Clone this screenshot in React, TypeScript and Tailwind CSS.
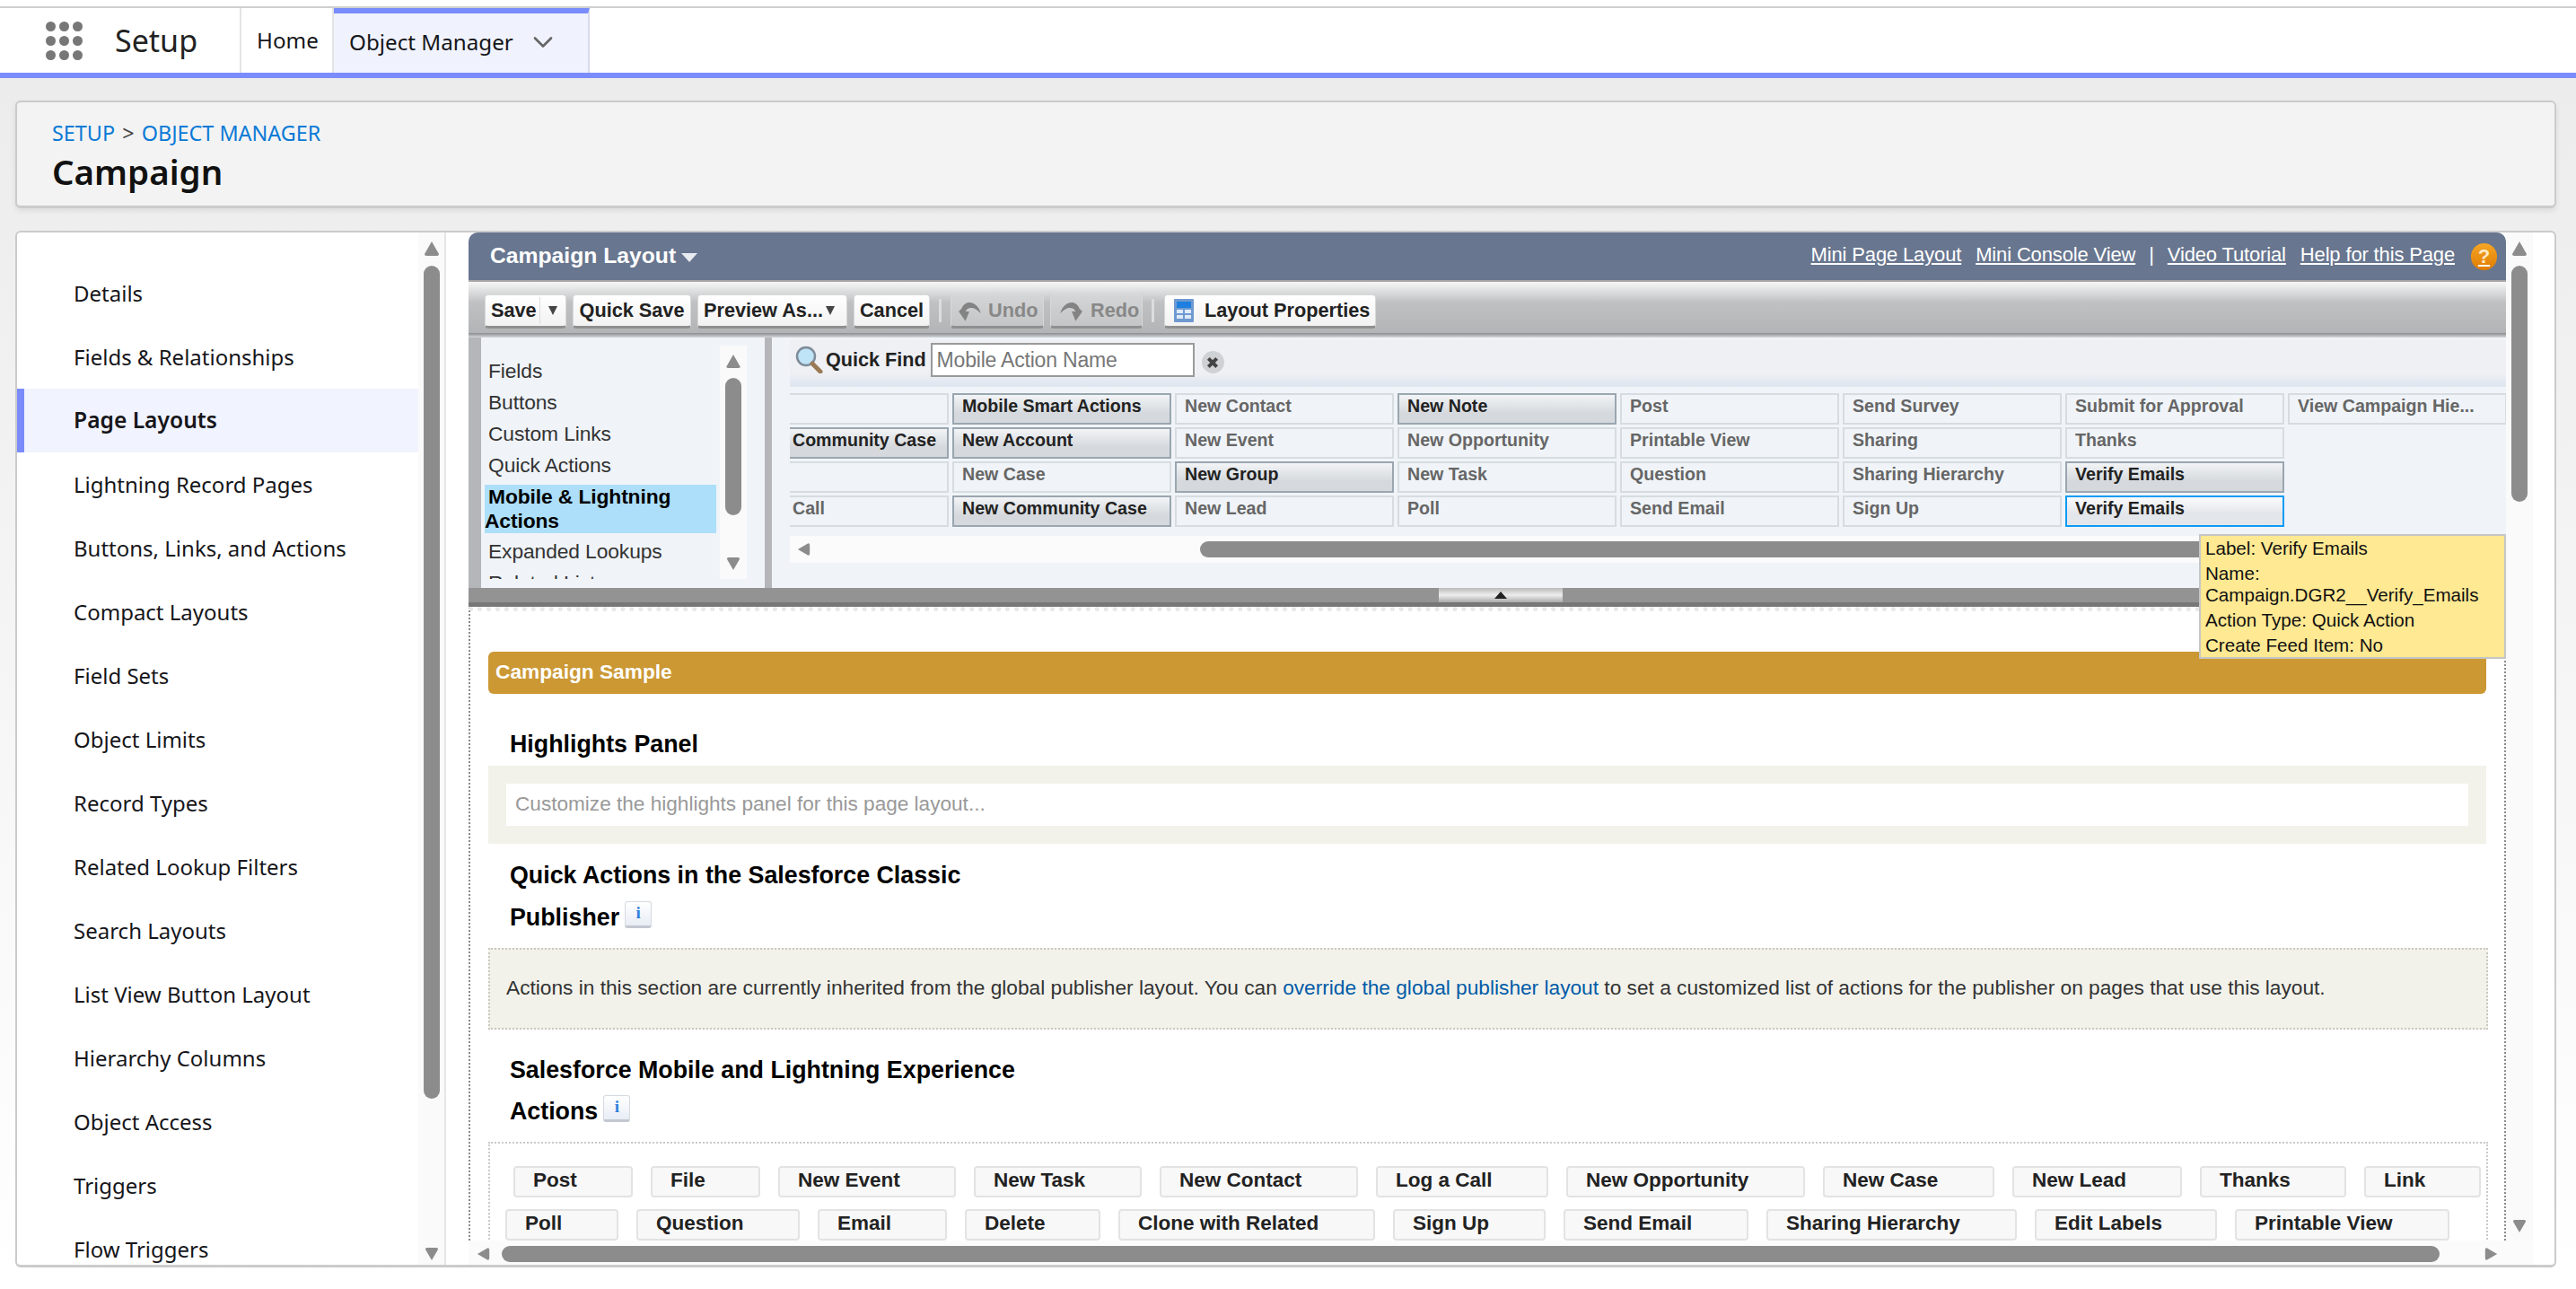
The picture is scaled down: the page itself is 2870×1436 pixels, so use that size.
import React from "react";
import { ChevronDown } from "lucide-react";

const sideItems = ["Details","Fields & Relationships","Page Layouts","Lightning Record Pages","Buttons, Links, and Actions","Compact Layouts","Field Sets","Object Limits","Record Types","Related Lookup Filters","Search Layouts","List View Button Layout","Hierarchy Columns","Object Access","Triggers","Flow Triggers"];

type Cell = { t: string; k?: "on" | "focus" };
const cells: (Cell | null)[] = [
  { t: "" },{ t: "Mobile Smart Actions", k: "on" },{ t: "New Contact" },{ t: "New Note", k: "on" },{ t: "Post" },{ t: "Send Survey" },{ t: "Submit for Approval" },{ t: "View Campaign Hie..." },
  { t: "Community Case", k: "on" },{ t: "New Account", k: "on" },{ t: "New Event" },{ t: "New Opportunity" },{ t: "Printable View" },{ t: "Sharing" },{ t: "Thanks" },null,
  { t: "" },{ t: "New Case" },{ t: "New Group", k: "on" },{ t: "New Task" },{ t: "Question" },{ t: "Sharing Hierarchy" },{ t: "Verify Emails", k: "on" },null,
  { t: "Call" },{ t: "New Community Case", k: "on" },{ t: "New Lead" },{ t: "Poll" },{ t: "Send Email" },{ t: "Sign Up" },{ t: "Verify Emails", k: "focus" },null,
];

const row1 = [["Post","w-[133px]"],["File","w-[122px]"],["New Event","w-[198px]"],["New Task","w-[187px]"],["New Contact","w-[221px]"],["Log a Call","w-[192px]"],["New Opportunity","w-[266px]"],["New Case","w-[191px]"],["New Lead","w-[189px]"],["Thanks","w-[163px]"],["Link","w-[130px]"]];
const row2 = [["Poll","w-[126px]"],["Question","w-[182px]"],["Email","w-[144px]"],["Delete","w-[151px]"],["Clone with Related","w-[286px]"],["Sign Up","w-[170px]"],["Send Email","w-[206px]"],["Sharing Hierarchy","w-[279px]"],["Edit Labels","w-[203px]"],["Printable View","w-[239px]"]];

function Tri({ dir, cls }: { dir: "up" | "down" | "left" | "right"; cls: string }) {
  const p = { up: "M9 1 L17 15 Q17 17 15 17 L3 17 Q1 17 1 15 Z", down: "M9 17 L17 3 Q17 1 15 1 L3 1 Q1 1 1 3 Z", left: "M1 9 L15 1 Q17 1 17 3 L17 15 Q17 17 15 17 Z", right: "M17 9 L3 1 Q1 1 1 3 L1 15 Q1 17 3 17 Z" }[dir];
  return <svg viewBox="0 0 18 18" className={cls}><path d={p} fill="#8c8c8c" /></svg>;
}

function Btn({ children, cls }: { children: React.ReactNode; cls: string }) {
  return <div className={"h-[38px] flex items-center whitespace-nowrap rounded-[4px] bg-gradient-to-b from-white to-[#f2f2f2] border border-[#d8d8d8] border-b-[3px] border-b-[#8f8f8f] text-[21.7px] font-bold " + cls}>{children}</div>;
}

function Caret() {
  return <svg viewBox="0 0 12 14" className="w-[10px] h-[14px]"><path d="M0 1 H12 L6 13 Z" fill="#444" /></svg>;
}

function InfoBtn() {
  return <span className="inline-flex w-[30px] h-[30px] items-center justify-center rounded-[3px] border border-[#d5d9e0] border-b-[3px] border-b-[#c3c8d0] bg-gradient-to-b from-white to-[#e8edf5] ml-[6px] align-[8px] font-['Liberation_Serif',serif] text-[#2f80dd] text-[19px] font-bold leading-none pb-[3px]">i</span>;
}

export default function App() {
  return (
    <div className="w-[2870px] h-[1436px] overflow-hidden flex flex-col bg-white font-['Noto_Sans',sans-serif] text-[#16161a]">
      <div className="h-[9px] border-b-2 border-[#cfcfcf] shrink-0" />
      <header className="h-[78px] shrink-0 flex border-b-[6px] border-[#7a8cfc] bg-white">
        <div className="w-[269px] flex items-center border-r-2 border-[#e4e4e4]">
          <div className="ml-[51px] grid grid-cols-3 gap-x-[4px] gap-y-[5px]">
            {Array.from({ length: 9 }).map((_, i) => <span key={i} className="w-[11px] h-[11px] rounded-full bg-[#777]" />)}
          </div>
          <span className="ml-[36px] text-[34px] leading-none text-[#222]">Setup</span>
        </div>
        <div className="w-[103px] flex items-center pl-[17px] border-r-2 border-[#e4e4e4] text-[24.2px] text-[#16161a]">Home</div>
        <div className="w-[285px] flex items-center pl-[17px] bg-[#f0f3fe] border-t-[6px] border-t-[#7a8cfc] border-r-2 border-r-[#d9dcec] text-[24.2px] pb-[2px]">
          <span>Object Manager</span>
          <ChevronDown className="w-[36px] h-[36px] ml-[15px] text-[#666]" strokeWidth={1.8} />
        </div>
      </header>
      <main className="flex-1 min-h-0 px-[17px] pt-[25px] pb-[24px] flex flex-col gap-[25px] bg-gradient-to-b from-[#ececec] to-white">
        <div className="h-[120px] w-[2831px] shrink-0 rounded-[6px] border-2 border-[#cbcbcb] border-b-[3px] bg-[#f3f3f3] shadow-[0_3px_6px_rgba(0,0,0,0.08)] pl-[39px] pt-[16px]">
          <div className="text-[23.4px] leading-[36px] text-[#0a7ad6]">SETUP <span className="text-[#444] mx-[2px]">&gt;</span> OBJECT MANAGER</div>
          <div className="text-[38.5px] leading-[50px] font-semibold text-[#111]">Campaign</div>
        </div>
        <div className="flex-1 min-h-0 w-[2831px] flex rounded-[6px] border-2 border-[#cbcbcb] border-b-[3px] bg-white overflow-hidden">
          <aside className="w-[478px] shrink-0 flex border-r-2 border-[#e6e6e6]">
            <nav className="w-[447px] shrink-0 pt-[32px]">
              {sideItems.map((s) => (
                <div key={s} className={"h-[71px] flex items-center pl-[63px] text-[24px] whitespace-nowrap " + (s === "Page Layouts" ? "border-l-[8px] border-[#7a8cfc] !pl-[55px] bg-[#f1f3fe] font-semibold !text-[24.6px]" : "")}>{s}</div>
              ))}
            </nav>
            <div className="w-[29px] shrink-0 bg-[#fafafa] flex flex-col items-center pt-[9px]">
              <Tri dir="up" cls="w-[18px] h-[18px]" />
              <div className="w-[18px] h-[928px] mt-[10px] rounded-full bg-[#8c8c8c]" />
              <Tri dir="down" cls="w-[18px] h-[16px] mt-[165px]" />
            </div>
          </aside>
          <section className="flex-1 min-w-0 flex flex-col pl-[25px] font-['Liberation_Sans',sans-serif]">
            <div className="h-[1123px] shrink-0 flex">
              <div className="w-[2270px] shrink-0 relative overflow-hidden">
                <div className="h-[53px] bg-[#68768f] rounded-t-[10px] flex items-center pl-[24px] pr-[10px] text-white">
                  <span className="text-[24.7px] font-bold pb-[2px]">Campaign Layout</span>
                  <svg viewBox="0 0 18 10" className="w-[18px] h-[10px] ml-[6px] mt-[3px]"><path d="M0 0 H18 L9 10 Z" fill="#e8ebf0" /></svg>
                  <div className="ml-auto flex items-center text-[22px] tracking-[-0.15px] underline">
                    <span className="pb-[4px]">Mini Page Layout</span>
                    <span className="ml-[16px] pb-[4px]">Mini Console View</span>
                    <span className="ml-[15px] mr-[15px] no-underline inline-block pb-[4px]">|</span>
                    <span className="pb-[4px]">Video Tutorial</span>
                    <span className="ml-[16px] pb-[4px]">Help for this Page</span>
                    <span className="ml-[18px] w-[29px] h-[30px] rounded-full bg-gradient-to-b from-[#f5a623] to-[#e07b00] items-center justify-center text-[22px] font-bold no-underline inline-flex text-[#ffe9c4]">?</span>
                  </div>
                </div>
                <div className="h-[2px] bg-[#a9a6a6]" />
                <div className="h-[57px] pt-[14px] pl-[18px] flex items-start gap-[7px] bg-gradient-to-b from-[#f7f7f7] via-[#c0c1c3] via-40% to-[#b3b4b6] text-[#222]">
                  <Btn cls="w-[91px] pl-[6px]"><span>Save</span><span className="ml-[3px] w-px h-[30px] bg-[#ddd]" /><span className="ml-[9px]"><Caret /></span></Btn>
                  <Btn cls="w-[132px] justify-center">Quick Save</Btn>
                  <Btn cls="w-[167px] pl-[6px]"><span>Preview As...</span><span className="ml-[3px]"><Caret /></span></Btn>
                  <Btn cls="w-[85px] justify-center">Cancel</Btn>
                  <span className="w-[3px] h-[26px] mt-[5px] mx-[3px] bg-[#ddd]" />
                  <Btn cls="w-[104px] !from-[#d4d5d6] !to-[#c4c5c6] text-[#888] pl-[6px] gap-[5px]">
                    <svg viewBox="0 0 28 28" className="w-[30px] h-[30px] shrink-0"><path d="M2 15 L9 25 L13 15 L9 15 C11 10 18 9 25 17 C22 5 9 1 5 12 Z" fill="#838383" /></svg><span>Undo</span>
                  </Btn>
                  <Btn cls="w-[103px] !from-[#d4d5d6] !to-[#c4c5c6] text-[#888] pl-[7px] gap-[7px]">
                    <svg viewBox="0 0 28 28" className="w-[30px] h-[30px] shrink-0"><path d="M26 15 L19 25 L15 15 L19 15 C17 10 10 9 3 17 C6 5 19 1 23 12 Z" fill="#838383" /></svg><span>Redo</span>
                  </Btn>
                  <span className="w-[3px] h-[26px] mt-[5px] mx-[3px] bg-[#ddd]" />
                  <Btn cls="w-[236px] pl-[10px] gap-[12px] ml-[1px]">
                    <svg viewBox="0 0 22 26" className="w-[22px] h-[26px] shrink-0"><rect width="22" height="26" rx="1" fill="#6f9ad0" /><rect x="3" y="3" width="16" height="7" fill="#1f7fe0" /><rect x="3" y="12" width="7" height="4" fill="#dfeafa" /><rect x="12" y="12" width="7" height="4" fill="#dfeafa" /><rect x="3" y="18" width="7" height="4" fill="#dfeafa" /><rect x="12" y="18" width="7" height="4" fill="#dfeafa" /></svg>
                    <span>Layout Properties</span>
                  </Btn>
                </div>
                <div className="h-[5px] bg-gradient-to-b from-[#8a8d90] to-[#d5d7da]" />
                <div className="h-[279px] bg-[#b4b6b9] pl-[14px] flex">
                  <div className="w-[316px] shrink-0 bg-[#f0f4f8] relative pl-[4px] pt-[6px] overflow-hidden">
                    <div className="h-[263px] w-[258px] overflow-hidden text-[22.8px] tracking-[-0.1px] text-[#333] pt-[14px]">
                      {["Fields","Buttons","Custom Links","Quick Actions"].map((t) => <div key={t} className="h-[35px] leading-[35px] pl-[4px]">{t}</div>)}
                      <div className="h-[54px] bg-[#addffa] text-[#000] font-bold leading-[27px] mt-[4px]"><span className="pl-[4px]">Mobile &amp; Lightning</span><br />Actions</div>
                      <div className="h-[35px] leading-[35px] pl-[4px] mt-[3px]">Expanded Lookups</div>
                      <div className="h-[35px] leading-[35px] pl-[4px]">Related Lists</div>
                    </div>
                    <div className="absolute left-[266px] top-[9px] w-[30px] h-[260px] bg-[#fafafa] flex flex-col items-center pt-[9px]">
                      <Tri dir="up" cls="w-[18px] h-[17px]" />
                      <div className="w-[18px] h-[153px] mt-[10px] rounded-full bg-[#8c8c8c]" />
                      <Tri dir="down" cls="w-[18px] h-[16px] mt-[46px]" />
                    </div>
                  </div>
                  <div className="w-[8px] shrink-0 bg-[#b4b6b9]" />
                  <div className="flex-1 min-w-0 bg-[#f0f4f8] pl-[20px] pt-[3px] overflow-hidden">
                    <div className="h-[52px] bg-gradient-to-b from-[#eff0f4] via-[#eff0f4] via-70% to-[#dde5f0] flex items-start">
                      <svg viewBox="0 0 32 32" className="w-[32px] h-[32px] mt-[5px] ml-[5px] shrink-0"><circle cx="13" cy="13" r="10" fill="#bfe3f7" stroke="#7f8c99" strokeWidth="2.5" /><path d="M20 21 L29 30" stroke="#9a7a55" strokeWidth="5" strokeLinecap="round" /></svg>
                      <span className="ml-[3px] mt-[10px] text-[21.6px] font-bold text-[#222] leading-[23px] whitespace-nowrap">Quick Find</span>
                      <div className="ml-[5px] mt-[3px] w-[294px] h-[38px] bg-white border-2 border-[#9a9a9a] flex items-center pl-[5px] pt-[1px] text-[23px] tracking-[-0.2px] text-[#777] whitespace-nowrap">Mobile Action Name</div>
                      <span className="ml-[8px] mt-[12px] w-[25px] h-[25px] rounded-full bg-[#cfd2d5] flex items-center justify-center">
                        <svg viewBox="0 0 12 12" className="w-[14px] h-[14px]"><path d="M2 2 L10 10 M10 2 L2 10" stroke="#444" strokeWidth="3.4" /></svg>
                      </span>
                    </div>
                    <div className="mt-[7px] grid grid-cols-[177px_repeat(7,244px)] gap-x-[4px] gap-y-[3px] text-[19.6px] font-bold">
                      {cells.map((c, i) => {
                        if (!c) return <div key={i} className="h-[35px]" />;
                        const first = i % 8 === 0;
                        const base = "h-[35px] flex items-center border-2 whitespace-nowrap pb-[5px] ";
                        const pad = first ? "border-l-0 pl-[3px] " : "pl-[9px] ";
                        const look = c.k === "on" ? "border-[#9aa6b0] bg-gradient-to-b from-[#f2f4f6] to-[#d5d9dd] via-[#d5d9dd] via-65% text-[#222]" : c.k === "focus" ? "border-[#0a9bf5] bg-gradient-to-b from-[#fafbfc] via-[#e3e6ea] via-60% to-[#e3e6ea] text-[#222]" : "border-[#d6dce0] text-[#666]";
                        return <div key={i} className={base + pad + look}>{c.t}</div>;
                      })}
                    </div>
                    <div className="mt-[10px] h-[30px] bg-[#fbfbfb] flex items-center">
                      <Tri dir="left" cls="w-[15px] h-[18px] ml-[8px]" />
                      <div className="w-[1140px] h-[18px] rounded-full bg-[#8c8c8c] ml-[434px]" />
                    </div>
                  </div>
                </div>
                <div className="h-[16px] bg-[#939393] flex justify-center">
                  <div className="w-[138px] h-[16px] ml-[30px] bg-gradient-to-b from-[#bbb] via-[#eee] to-[#aaa] flex items-center justify-center">
                    <svg viewBox="0 0 14 8" className="w-[14px] h-[8px]"><path d="M7 0 L14 8 H0 Z" fill="#222" /></svg>
                  </div>
                </div>
                <div className="h-[5px] bg-[#777]" />
                <div className="h-[706px] border-x-2 border-dotted border-x-[#8a8a8a] pl-[20px] pr-[18px] border-t-[5px] border-t-[#e8e8e8] overflow-hidden">
                  <div className="mt-[45px] h-[47px] mr-[2px] bg-[#cb9834] rounded-[6px] flex items-center pl-[8px] pb-[2px] text-white text-[22.7px] font-bold">Campaign Sample</div>
                  <h2 className="mt-[41px] pl-[24px] text-[26.8px] leading-[30px] font-bold text-black">Highlights Panel</h2>
                  <div className="mt-[9px] h-[87px] mr-[2px] bg-[#f2f2eb] px-[20px] pt-[20px]"><div className="h-[47px] bg-white flex items-center pl-[10px] pb-[2px] text-[22.6px] text-[#999]">Customize the highlights panel for this page layout...</div></div>
                  <h2 className="mt-[12px] pl-[24px] text-[26.8px] leading-[47px] font-bold text-black">Quick Actions in the Salesforce Classic<br />Publisher<InfoBtn /></h2>
                  <div className="mt-[10px] h-[91px] bg-[#f2f2eb] border-2 border-dotted border-[#c9c9c0] flex items-center pl-[18px] pb-[2px] text-[22.7px] text-[#333] whitespace-nowrap">
                    <span>Actions in this section are currently inherited from the global publisher layout. You can <span className="text-[#015ba7]">override the global publisher layout</span> to set a customized list of actions for the publisher on pages that use this layout.</span>
                  </div>
                  <h2 className="mt-[22px] pl-[24px] text-[26.8px] leading-[46px] font-bold text-black">Salesforce Mobile and Lightning Experience<br />Actions<InfoBtn /></h2>
                  <div className="mt-[11px] border-2 border-dotted border-[#c9c9c9] border-b-0 h-[120px] pt-[25px] text-[22.5px] font-bold text-[#222] overflow-hidden">
                    <div className="flex gap-[20px] pl-[26px]">
                      {row1.map(([t, w]) => <div key={t} className={"h-[35px] shrink-0 bg-[#f8f8f8] border-2 border-[#e3e3e3] rounded-[4px] flex items-center pl-[20px] pb-[3px] whitespace-nowrap " + w}>{t}</div>)}
                    </div>
                    <div className="mt-[13px] flex gap-[20px] pl-[17px]">
                      {row2.map(([t, w]) => <div key={t} className={"h-[35px] shrink-0 bg-[#f8f8f8] border-2 border-[#e3e3e3] rounded-[4px] flex items-center pl-[20px] pb-[3px] whitespace-nowrap " + w}>{t}</div>)}
                    </div>
                  </div>
                </div>
                <div className="absolute left-[1928px] top-[336px] w-[342px] h-[139px] bg-[#ffe992] border-2 border-[#c6c6c6] pl-[5px] pt-[2px] text-[20.6px] text-[#111] leading-[24px]">
                  <div>Label: Verify Emails</div>
                  <div className="mt-[4px]">Name:</div>
                  <div>Campaign.DGR2__Verify_Emails</div>
                  <div className="mt-[4px]">Action Type: Quick Action</div>
                  <div className="mt-[4px]">Create Feed Item: No</div>
                </div>
              </div>
              <div className="w-[30px] shrink-0 bg-[#fafafa] flex flex-col items-center pt-[9px]">
                <Tri dir="up" cls="w-[18px] h-[18px]" />
                <div className="w-[18px] h-[263px] mt-[10px] rounded-full bg-[#8c8c8c]" />
                <Tri dir="down" cls="w-[18px] h-[16px] mt-[799px]" />
              </div>
            </div>
            <div className="h-[30px] w-[2300px] shrink-0 bg-[#fbfbfb] flex items-center">
              <Tri dir="left" cls="w-[15px] h-[18px] ml-[9px]" />
              <div className="w-[2159px] h-[18px] ml-[13px] rounded-full bg-[#8c8c8c]" />
              <Tri dir="right" cls="w-[15px] h-[18px] ml-[50px]" />
            </div>
          </section>
        </div>
      </main>
    </div>
  );
}
